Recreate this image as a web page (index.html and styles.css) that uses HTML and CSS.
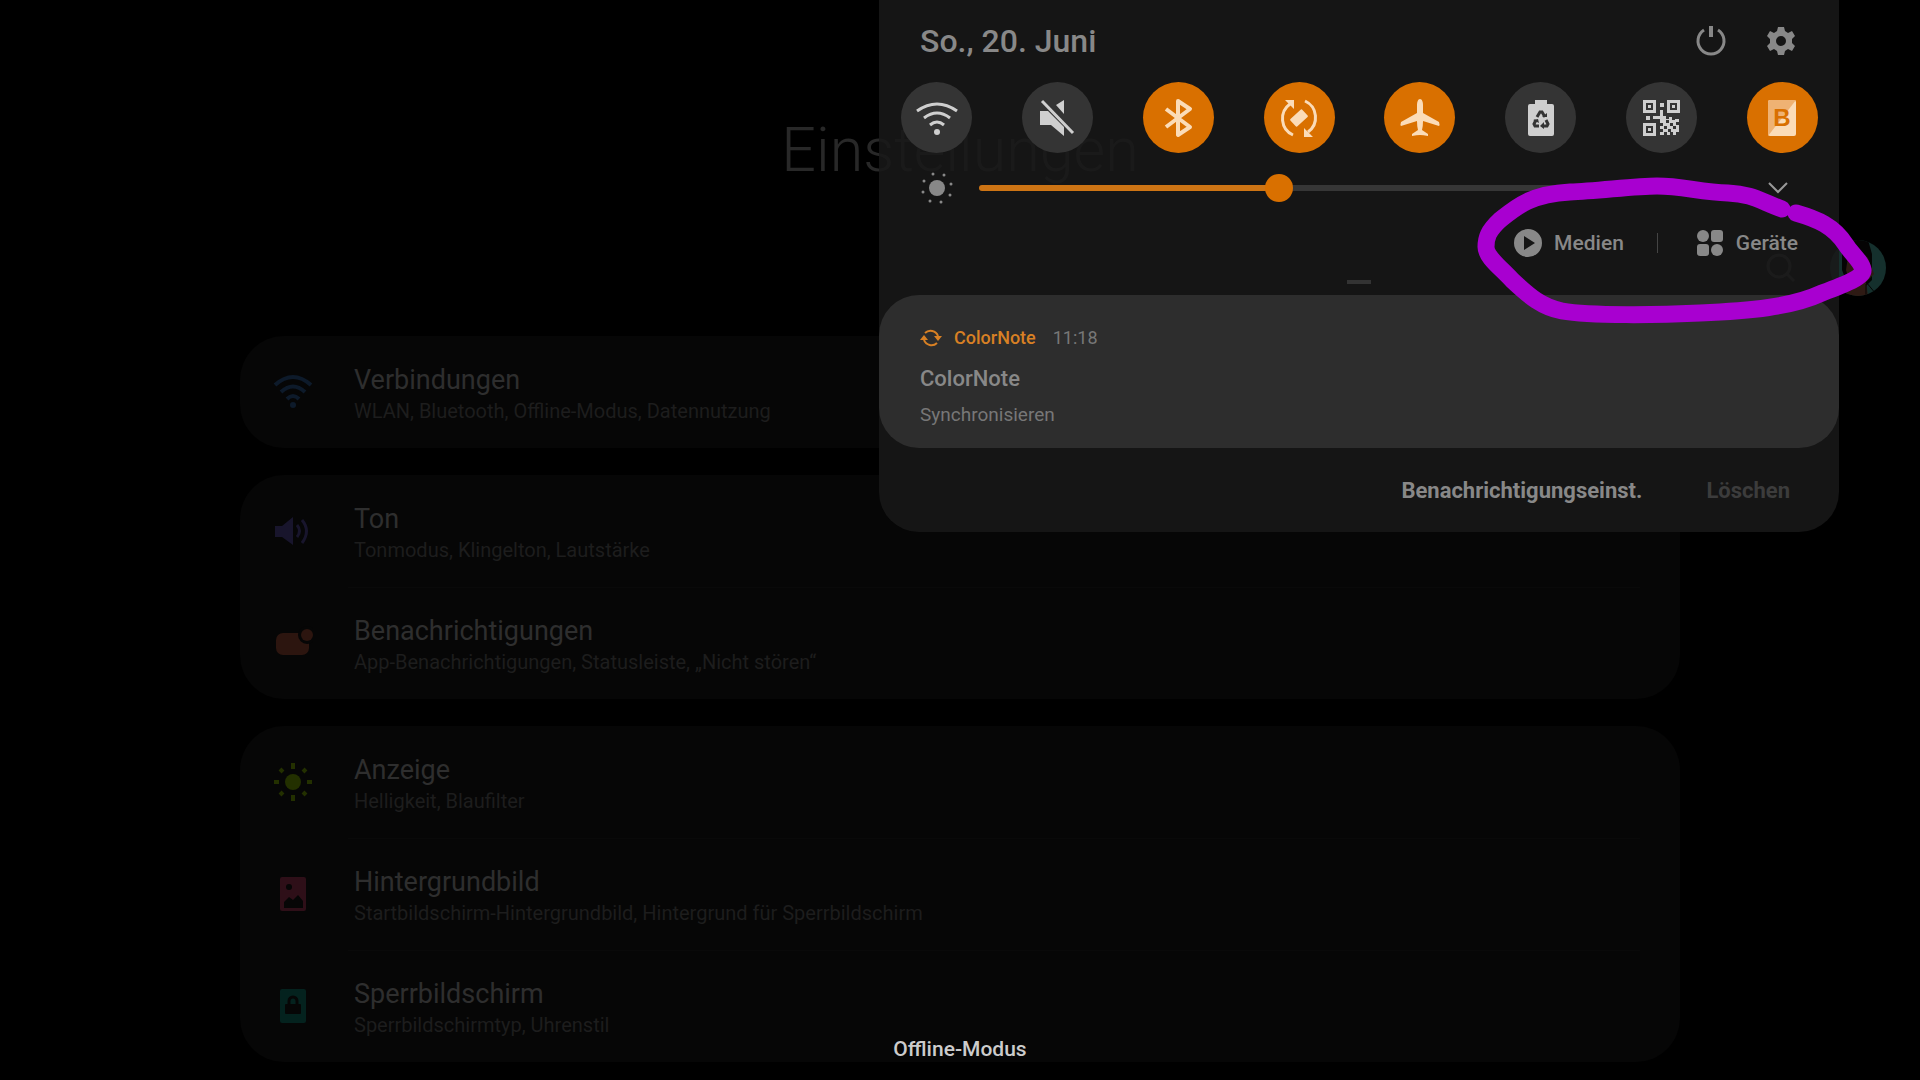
FILE: index.html
```html
<!DOCTYPE html>
<html lang="de">
<head>
    <title>Einstellungen</title>
    <meta charset="utf-8">
    <meta name="viewport" content="width=device-width, initial-scale=1">
    <link rel="stylesheet" href="styles.css">
</head>

<body>
    <!-- SETTINGS PAGE (dimmed) -->
    <main class="settings">
        <h1>Einstellungen</h1>
        <div class="toolbar">
            <svg class="search" viewBox="0 0 30 30"><circle cx="13" cy="13" r="11"/><path d="M20 20L28 28"/></svg>
            <svg class="avatar" viewBox="0 0 56 56">
                <defs><clipPath id="round"><circle cx="28" cy="28" r="28"/></clipPath></defs>
                <g clip-path="url(#round)">
                    <rect width="56" height="56" fill="#15302d"/>
                    <path d="M12 0H38L42 14V40L36 46H18L12 30Z" fill="#050404"/>
                    <path d="M18 16Q28 8 38 18L44 34L36 42L38 56H10L20 44L16 30Z" fill="#2e1a14"/>
                    <path d="M36 42L46 54M36 44V56" stroke="#050404" fill="none"/>
                </g>
            </svg>
        </div>

        <ul class="group">
            <li><a href="#">
                <svg class="wifi" viewBox="-20 -20 40 40"><path d="M-18 -7Q0 -23 18 -7M-12 0Q0 -11 12 0M-6 7Q0 1 6 7"/><circle cx="0" cy="13" r="3"/></svg>
                <span><b>Verbindungen</b><small>WLAN, Bluetooth, Offline-Modus, Datennutzung</small></span>
            </a></li>
        </ul>
        <ul class="group">
            <li><a href="#">
                <svg class="sound" viewBox="-20 -20 40 40"><path class="fill" d="M-18 -5H-11L0 -14V14L-11 6H-18Z"/><path d="M4 -6Q9 0 4 6M9 -11Q18 0 9 12"/></svg>
                <span><b>Ton</b><small>Tonmodus, Klingelton, Lautstärke</small></span>
            </a></li>
            <li><a href="#">
                <svg class="bell" viewBox="-20 -20 40 40"><rect x="-17" y="-10" width="33" height="22" rx="7"/><circle class="hole" cx="14" cy="-8" r="9"/><circle cx="14" cy="-8" r="6"/></svg>
                <span><b>Benachrichtigungen</b><small>App-Benachrichtigungen, Statusleiste, „Nicht stören“</small></span>
            </a></li>
        </ul>
        <ul class="group">
            <li><a href="#">
                <svg class="display" viewBox="-20 -20 40 40"><circle cx="0" cy="0" r="8"/><path d="M0 -19V-13M0 13V19M-19 0H-14M14 0H19M-13 -13L-10 -10M10 10L13 13M13 -13L10 -10M-10 10L-13 13"/></svg>
                <span><b>Anzeige</b><small>Helligkeit, Blaufilter</small></span>
            </a></li>
            <li><a href="#">
                <svg class="wallpaper" viewBox="-20 -20 40 40"><rect x="-13" y="-17" width="26" height="34" rx="2"/><circle class="hole" cx="-4" cy="-7" r="3"/><path class="hole" d="M-9 14V8L-4 3L0 6L5 1L10 7V14Z"/></svg>
                <span><b>Hintergrundbild</b><small>Startbildschirm-Hintergrundbild, Hintergrund für Sperrbildschirm</small></span>
            </a></li>
            <li><a href="#">
                <svg class="lock" viewBox="-20 -20 40 40"><rect x="-13" y="-17" width="26" height="34" rx="2"/><rect class="hole" x="-8" y="-2" width="16" height="10" rx="1"/><path d="M-4 -2V-5A4 4 0 0 1 4 -5V-2"/></svg>
                <span><b>Sperrbildschirm</b><small>Sperrbildschirmtyp, Uhrenstil</small></span>
            </a></li>
        </ul>
    </main>

    <!-- QUICK PANEL -->
    <section class="panel">
        <header>
            <h2>So., 20. Juni</h2>
            <button aria-label="Ausschalten"><svg viewBox="-16 -16 32 32"><path class="line" d="M-7 -11A13 13 0 1 0 7 -11"/><path class="line stem" d="M0 -15V-4"/></svg></button>
            <button aria-label="Einstellungen"><svg viewBox="-16 -16 32 32"><path fill-rule="evenodd" d="M-3 -14H3L4 -10L7 -8L11 -10L14 -5L11 -2V2L14 5L11 10L7 8L4 10L3 14H-3L-4 10L-7 8L-11 10L-14 5L-11 2V-2L-14 -5L-11 -10L-7 -8L-4 -10ZM0 -5A5 5 0 1 0 0 5A5 5 0 1 0 0 -5Z"/></svg></button>
        </header>

        <div class="toggles">
            <button aria-label="WLAN"><svg viewBox="-24 -24 48 48"><path class="line" d="M-20 -7Q0 -21 20 -7M-13 0Q0 -10 13 0M-7 7Q0 1 7 7"/><circle cx="0" cy="14" r="3"/></svg></button>
            <button aria-label="Stumm"><svg viewBox="-24 -24 48 48"><path d="M-17 -7H-9L7 9V18L-6 7H-17ZM-1 -13L7 -18V-4Z"/><path class="line" d="M-15 -17L16 15"/></svg></button>
            <button class="on" aria-label="Bluetooth"><svg viewBox="-24 -24 48 48"><path class="line thick" d="M-12 -9L12 9L0 17V-17L12 -9L-12 9"/></svg></button>
            <button class="on" aria-label="Automatisch drehen"><svg viewBox="-24 -24 48 48"><path class="line" d="M-6 17A18 18 0 0 1 -9 -14M6 -17A18 18 0 0 1 9 14"/><path d="M-14 -18H-5V-9L-8 -12L-11 -15ZM14 19H5V10L8 13L11 16Z"/><rect x="-8" y="-5" width="16" height="10" rx="1" transform="rotate(-42)"/></svg></button>
            <button class="on" aria-label="Offline-Modus"><svg viewBox="-24 -24 48 48"><path d="M0 -19C2 -19 3 -16 3 -13V-5L19 4Q20 7 19 8L3 3Q3 9 2 12L8 16V18Q3 17 0 17Q-3 17 -8 18V16L-2 12Q-3 9 -3 3L-19 8Q-20 7 -19 4L-3 -5V-13C-3 -16 -2 -19 0 -19Z"/></svg></button>
            <button aria-label="Energiesparen"><svg viewBox="-24 -24 48 48"><path d="M-6 -18H6V-14H11Q13 -14 13 -12V16Q13 18 11 18H-11Q-13 18 -13 16V-12Q-13 -14 -11 -14H-6Z"/><path class="recycle" d="M-4 -1L-1 -6H1L4 -1M5 2L7 6L6 8H2M-2 8H-6L-7 6L-5 2"/><path class="arrows" d="M1 -1H6V-5ZM3 4V11L-1 8ZM-8 2L-3 1L-2 5Z"/></svg></button>
            <button aria-label="QR-Scanner"><svg viewBox="-24 -24 48 48"><path fill-rule="evenodd" d="M-19 -18H-6V-5H-19ZM-16 -15V-8H-9V-15ZM5 -18H18V-5H5ZM8 -15V-8H15V-15ZM-19 5H-6V18H-19ZM-16 8V15H-9V8Z"/><path d="M-14 -13H-11V-10H-14ZM10 -13H13V-10H10ZM-14 10H-11V13H-14ZM-2 -15H2V-11H-2ZM-2 -8H1V-2H4V1H7V-1H10V2H13V1H17V4H14V7H17V14H14V17H11V14H8V17H5V14H2V17H-2V14H1V11H-2V8H1V5H-2V1H-9V-2H-2ZM-16 -2H-12V2H-16Z"/><path class="dots" d="M4 2H7V5H4ZM8 5H11V8H8ZM2 8H5V11H2ZM11 8H14V11H11ZM6 11H9V14H6Z"/></svg></button>
            <button class="on" aria-label="Bixby Routinen"><svg viewBox="-24 -24 48 48"><rect x="-14" y="-18" width="28" height="36" rx="2"/><path class="shade" d="M-14 18V-16Q-14 -18 -12 -18H14Z"/><text x="0" y="8">B</text></svg></button>
        </div>

        <div class="brightness">
            <svg viewBox="-18 -18 36 36"><circle cx="0" cy="0" r="8"/><path class="line" stroke-linecap="round" d="M-4 -14h0M7 -13h0M14 -4h0M13 7h0M4 14h0M-7 13h0M-14 4h0M-13 -7h0"/></svg>
            <input type="range" min="0" max="255" value="100" aria-label="Helligkeit">
            <button aria-label="Mehr"><svg viewBox="0 0 20 12"><path d="M1 1L10 10L19 1"/></svg></button>
        </div>

        <div class="shortcuts">
            <button><svg viewBox="0 0 28 28"><path fill-rule="evenodd" d="M14 0A14 14 0 1 1 14 28A14 14 0 1 1 14 0ZM10 7V21L21 14Z"/></svg>Medien</button>
            <i></i>
            <button><svg viewBox="0 0 28 28"><circle cx="7" cy="7" r="6"/><rect x="15" y="1" width="12" height="12" rx="3"/><rect x="1" y="15" width="12" height="12" rx="3"/><circle cx="21" cy="21" r="6"/></svg>Geräte</button>
        </div>
        <div class="handle"></div>

        <article class="notification">
            <div class="app">
                <svg viewBox="0 0 22 20"><path class="line" d="M5 5A8 8 0 0 1 18 8M17 15A8 8 0 0 1 4 12"/><path d="M14 8H22L18 13ZM0 12H8L4 7Z"/></svg>
                <strong>ColorNote</strong>
                <time>11:18</time>
            </div>
            <h3>ColorNote</h3>
            <p>Synchronisieren</p>
        </article>

        <footer>
            <button>Benachrichtigungseinst.</button>
            <button disabled>Löschen</button>
        </footer>

        <!-- marker stroke -->
        <svg class="marker" viewBox="1470 170 410 160">
            <path d="M1782 209C1760 201 1752 194 1728 193C1700 192 1682 186 1657 186C1635 186 1598 191 1570 192C1530 194 1515 208 1500 220C1488 231 1486 238 1486 247C1486 257 1500 267 1512 280C1530 297 1542 307 1562 311C1590 316 1660 315 1700 313C1750 311 1792 307 1822 293C1846 284 1864 277 1863 270C1862 262 1851 253 1846 245C1834 226 1817 219 1796 213"/>
        </svg>
    </section>

    <div class="toast">Offline-Modus</div>
</body>
</html>
```
FILE: styles.css
```css
* { box-sizing: border-box; }

html, body {
    margin: 0;
    padding: 0;
    min-height: 100%;
    background: #000;
    font-family: Roboto, "Liberation Sans", sans-serif;
}
body { position: relative; }

svg { display: block; flex: none; }
ul, h1, h2, h3, p { margin: 0; padding: 0; }

button {
    padding: 0;
    border: 0;
    background: none;
    color: inherit;
    font: inherit;
}

/*** settings page ***/
.settings { padding: 114px 0 19px; }

.settings h1 {
    color: #282828;
    font-size: 61px;
    font-weight: 300;
    line-height: 72px;
    text-align: center;
}

.toolbar {
    display: flex;
    justify-content: flex-end;
    align-items: center;
    gap: 34px;
    margin: 54px 34px 40px 0;
}
.search {
    width: 30px;
    height: 30px;
    fill: none;
    stroke: #303030;
    stroke-width: 3;
}
.avatar { width: 56px; height: 56px; }

.group {
    width: 75%;
    margin: 0 auto 27px;
    border-radius: 44px;
    background: #060606;
    list-style: none;
}
.group:last-child { margin-bottom: 0; }
.group li + li a::before {
    content: "";
    position: absolute;
    top: 0;
    left: 108px;
    right: 40px;
    height: 1px;
    background: #090909;
}
.group a {
    position: relative;
    display: flex;
    align-items: center;
    gap: 41px;
    height: 112px;
    padding-left: 33px;
    color: #2e2e2e;
    text-decoration: none;
}
.group svg { width: 40px; height: 40px; }
.group span { padding-top: 6px; }
.group b {
    display: block;
    font-size: 27px;
    font-weight: 400;
    line-height: 32px;
}
.group small {
    display: block;
    color: #1d1d1d;
    font-size: 20px;
    line-height: 30px;
}

.wifi { fill: #0d1a2a; }
.wifi path { fill: none; stroke: #0d1a2a; stroke-width: 4; }
.sound { fill: none; stroke: #18152c; stroke-width: 3; }
.sound .fill { fill: #18152c; stroke: none; }
.bell { fill: #2c150f; }
.display { fill: #233000; stroke: #233000; stroke-width: 4; }
.display circle { stroke: none; }
.wallpaper { fill: #2e0f18; }
.lock { fill: #04221e; }
.lock path { fill: none; stroke: #060606; stroke-width: 3; }
.group .hole { fill: #060606; }

/*** quick panel over the page ***/
.panel {
    position: absolute;
    top: 0;
    right: 81px;
    width: 50%;
    border-radius: 0 0 40px 40px;
    background: rgba(25, 25, 25, 0.86);
    color: #888;
}

.panel header {
    display: flex;
    align-items: center;
    gap: 38px;
    padding: 20px 42px 0 41px;
}
.panel h2 {
    flex: 1;
    font-size: 32px;
    font-weight: 500;
    line-height: 42px;
}
.panel header svg { width: 32px; height: 32px; fill: #888; }
.panel .line { fill: none; stroke: #888; stroke-width: 3; }
.panel .stem { stroke-width: 4; }

.toggles {
    display: flex;
    justify-content: space-between;
    padding: 20px 21px 0 22px;
}
.toggles button {
    display: grid;
    place-items: center;
    width: 71px;
    height: 71px;
    border-radius: 50%;
    background: rgba(54, 54, 54, 0.94);
}
.toggles svg { width: 48px; height: 48px; fill: #cfcfcf; }
.toggles .line { stroke: #cfcfcf; }
.toggles .on { background: #d97000; }
.toggles .on svg { fill: #fbdcb8; }
.toggles .on .line { stroke: #fbdcb8; }
.toggles .on .thick { stroke-width: 4; stroke-linejoin: round; }
.toggles .recycle { fill: none; stroke: #343434; stroke-width: 3; }
.toggles .arrows, .toggles .dots { fill: #343434; }
.toggles .on .shade { fill: #efb273; }
.toggles text {
    fill: #d97000;
    font-family: "Liberation Sans", sans-serif;
    font-size: 24px;
    font-weight: bold;
    text-anchor: middle;
}

.brightness {
    display: flex;
    align-items: center;
    padding: 17px 51px 0 40px;
}
.brightness > svg { width: 36px; height: 36px; fill: #888; }
.brightness button svg {
    width: 20px;
    height: 12px;
    fill: none;
    stroke: #999;
    stroke-width: 2;
}
.brightness input {
    -webkit-appearance: none;
    appearance: none;
    flex: 1;
    height: 28px;
    margin: 0 32px 0 24px;
    background: none;
}
.brightness input::-webkit-slider-runnable-track {
    height: 6px;
    border-radius: 3px;
    background: linear-gradient(to right, #cd7414 40%, #363636 40%);
}
.brightness input::-webkit-slider-thumb {
    -webkit-appearance: none;
    width: 28px;
    height: 28px;
    margin-top: -11px;
    border-radius: 50%;
    background: #d97000;
}

.shortcuts {
    display: flex;
    justify-content: flex-end;
    align-items: center;
    gap: 33px;
    padding: 22px 41px 0 0;
    font-size: 21px;
    font-weight: 500;
    line-height: 30px;
}
.shortcuts button {
    display: flex;
    align-items: center;
    gap: 12px;
}
.shortcuts svg { width: 28px; height: 28px; fill: #888; }
.shortcuts i {
    width: 1px;
    height: 20px;
    margin-right: 5px;
    background: #444;
}
.handle {
    width: 24px;
    height: 4px;
    margin: 22px auto 11px;
    background: #333;
}

.notification {
    padding: 29px 41px 18px;
    border-radius: 40px;
    background: #2d2d2d;
}
.notification .app {
    display: flex;
    align-items: center;
    font-size: 18px;
    line-height: 28px;
}
.notification svg { width: 22px; height: 20px; fill: #d88024; }
.notification .line { stroke: #d88024; stroke-width: 2; }
.notification strong {
    margin: 0 17px 0 12px;
    color: #d88024;
    font-weight: 500;
}
.notification time { color: #777; }
.notification h3 {
    margin-top: 10px;
    font-size: 22px;
    font-weight: 500;
    line-height: 34px;
}
.notification p {
    margin-top: 4px;
    color: #777;
    font-size: 19px;
    line-height: 30px;
}

.panel footer {
    display: flex;
    justify-content: flex-end;
    gap: 64px;
    padding: 27px 49px 25px;
    font-size: 22px;
    font-weight: 700;
    line-height: 32px;
}
.panel footer button:disabled { color: #3c3c3c; }

.marker {
    position: absolute;
    top: 170px;
    right: -41px;
    width: 410px;
    height: 160px;
    fill: none;
    stroke: #a800d0;
    stroke-width: 17;
    stroke-linecap: round;
    stroke-linejoin: round;
    pointer-events: none;
}

/*** label at the bottom ***/
.toast {
    position: absolute;
    bottom: 16px;
    left: 0;
    right: 0;
    color: #ccc;
    font-size: 21px;
    font-weight: 500;
    line-height: 32px;
    text-align: center;
}
```
